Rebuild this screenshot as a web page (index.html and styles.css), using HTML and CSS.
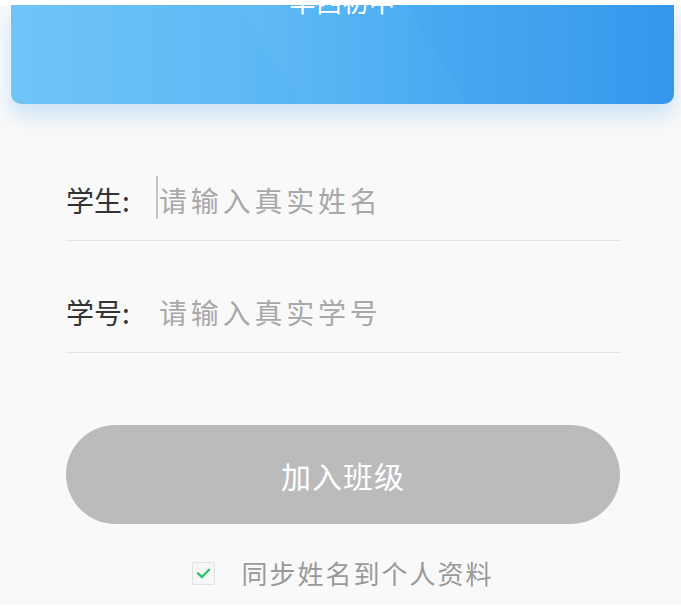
FILE: index.html
```html
<!DOCTYPE html>
<html lang="zh-CN">
<head>
<meta charset="utf-8">
<title>加入班级</title>
<link rel="stylesheet" href="styles.css">
</head>
<body>
<div class="screen">
  <header class="card">
    <div class="card-title">华西初中</div>
  </header>
  <form class="form">
    <label class="field">
      <span class="field-label">学生:</span>
      <span class="field-input is-focused">请输入真实姓名</span>
    </label>
    <label class="field">
      <span class="field-label">学号:</span>
      <span class="field-input">请输入真实学号</span>
    </label>
    <button type="button" class="join-btn">加入班级</button>
    <div class="sync">
      <span class="checkbox">
        <svg viewBox="0 0 22 22" width="22" height="22"><path d="M5.2 11.4 L9.4 15.2 L16.8 7.6" fill="none" stroke="#35c46c" stroke-width="2.6" stroke-linecap="round" stroke-linejoin="round"/></svg>
      </span>
      <span class="sync-text">同步姓名到个人资料</span>
    </div>
  </form>
</div>
</body>
</html>
```

FILE: styles.css
```css
html, body {
  margin: 0;
  padding: 0;
  background: #ffffff;
  font-family: "Noto Sans CJK SC", "Noto Sans", sans-serif;
}

.screen {
  margin-top: 5px;
  height: 600px;
  background: #f9f9f9;
  overflow: hidden;
}

.card {
  margin: 0 7px 0 11px;
  height: 99px;
  border-radius: 0 0 10px 10px;
  overflow: hidden;
  text-align: center;
  background:
    linear-gradient(58deg, rgba(255,255,255,0) 0%, rgba(255,255,255,0) 40%, rgba(255,255,255,0.025) 40%, rgba(255,255,255,0.025) 63%, rgba(255,255,255,0) 63%),
    linear-gradient(90deg, #6fc5f6 0%, #5eb9f5 35%, #48aaf1 62%, #3e9fee 85%, #3497ec 100%);
  box-shadow: 0 12px 20px rgba(64, 160, 235, 0.24);
  position: relative;
}

.card-title {
  color: #ffffff;
  font-size: 26px;
  line-height: 26px;
  margin-top: -17px;
  letter-spacing: 0.5px;
}

.form {
  margin: 25px 61px 0 66px;
  display: flex;
  flex-direction: column;
}

.field {
  display: flex;
  align-items: center;
  padding: 51px 0 20px;
  height: 40px;
  border-bottom: 1px solid #e4e4e4;
}

.field-label {
  flex: 0 0 93px;
  font-size: 28px;
  line-height: 40px;
  color: #333333;
}

.field-input {
  position: relative;
  font-size: 28px;
  line-height: 40px;
  letter-spacing: 3.8px;
  color: #a8a8a8;
}

.field-input.is-focused::before {
  content: "";
  position: absolute;
  left: -3px;
  top: -4px;
  width: 2px;
  height: 43px;
  background: #c6c6c6;
}

.join-btn {
  margin-top: 72px;
  height: 99px;
  border: none;
  border-radius: 50px;
  background: #bbbbbb;
  color: #ffffff;
  font-family: "Noto Sans CJK SC", "Noto Sans", sans-serif;
  font-size: 30px;
  letter-spacing: 1px;
  padding: 0;
}

.sync {
  margin-top: 34px;
  display: flex;
  justify-content: center;
  align-items: center;
  gap: 26px;
}

.checkbox {
  width: 21px;
  height: 21px;
  border: 1px solid #e2e2e2;
  border-radius: 2px;
  background: #f6f6f6;
  display: flex;
  align-items: center;
  justify-content: center;
  overflow: hidden;
}

.sync-text {
  font-size: 26px;
  line-height: 30px;
  letter-spacing: 2px;
  color: #999999;
}
```
